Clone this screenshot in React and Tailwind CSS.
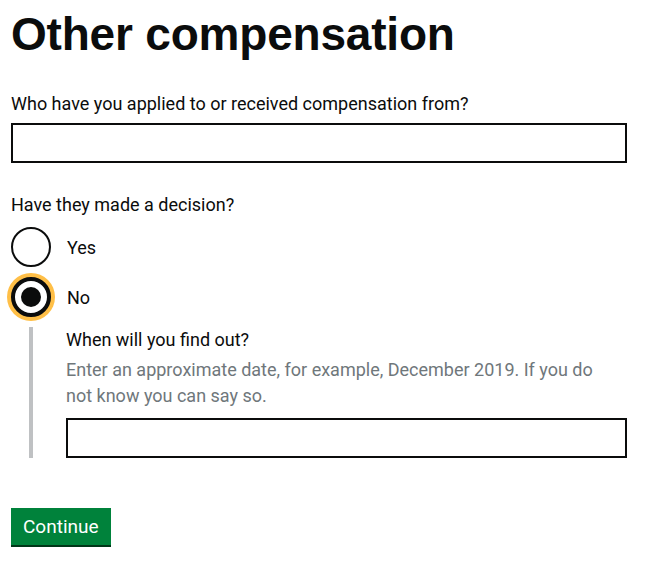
import { useState } from "react";

function Radio({ label, checked, onSelect }) {
  return (
    <div className="flex items-center h-10 mb-[10px] cursor-pointer" onClick={onSelect}>
      <span
        className={`relative flex items-center justify-center w-10 h-10 shrink-0 rounded-full border-[#0b0c0c] bg-white ${
          checked ? "border-4 ring-4 ring-[#ffbf47]" : "border-2"
        }`}
      >
        {checked && <span className="block w-5 h-5 rounded-full bg-[#0b0c0c]" />}
      </span>
      <span className="pl-4 text-[18px] leading-[25px]">{label}</span>
    </div>
  );
}

export default function App() {
  const [decision, setDecision] = useState("no");

  return (
    <div
      className="min-h-screen bg-white text-[#0b0c0c] pl-[11px] pt-[9px]"
      style={{ fontFamily: "Roboto, 'Liberation Sans', sans-serif" }}
    >
      <h1
        className="text-[46px] leading-[50px] font-bold tracking-[-0.2px]"
        style={{ fontFamily: "'Liberation Sans', Arial, sans-serif" }}
      >
        Other compensation
      </h1>

      <label className="block mt-[32px] text-[18px] leading-[25px]">
        Who have you applied to or received compensation from?
      </label>
      <input type="text" className="block mt-[7px] w-[616px] h-10 border-2 border-[#0b0c0c] px-2 outline-none" />

      <fieldset className="mt-[29px]">
        <legend className="text-[18px] leading-[25px] mb-[10px]">Have they made a decision?</legend>
        <Radio label="Yes" checked={decision === "yes"} onSelect={() => setDecision("yes")} />
        <Radio label="No" checked={decision === "no"} onSelect={() => setDecision("no")} />

        {decision === "no" && (
          <div className="ml-[18px] pl-[33px] border-l-4 border-[#bfc1c3]">
            <label className="block text-[18px] leading-[25px]">When will you find out?</label>
            <p className="mt-[5px] w-[550px] text-[18px] leading-[26px] text-[#6f777b]">
              Enter an approximate date, for example, December 2019. If you do not know you can say so.
            </p>
            <input type="text" className="block mt-[9px] w-[561px] h-10 border-2 border-[#0b0c0c] px-2 outline-none" />
          </div>
        )}
      </fieldset>

      <button className="mt-[50px] h-[37px] px-3 bg-[#00823b] text-white text-[19px] leading-[19px] shadow-[0_2px_0_#003618]">
        Continue
      </button>
    </div>
  );
}
